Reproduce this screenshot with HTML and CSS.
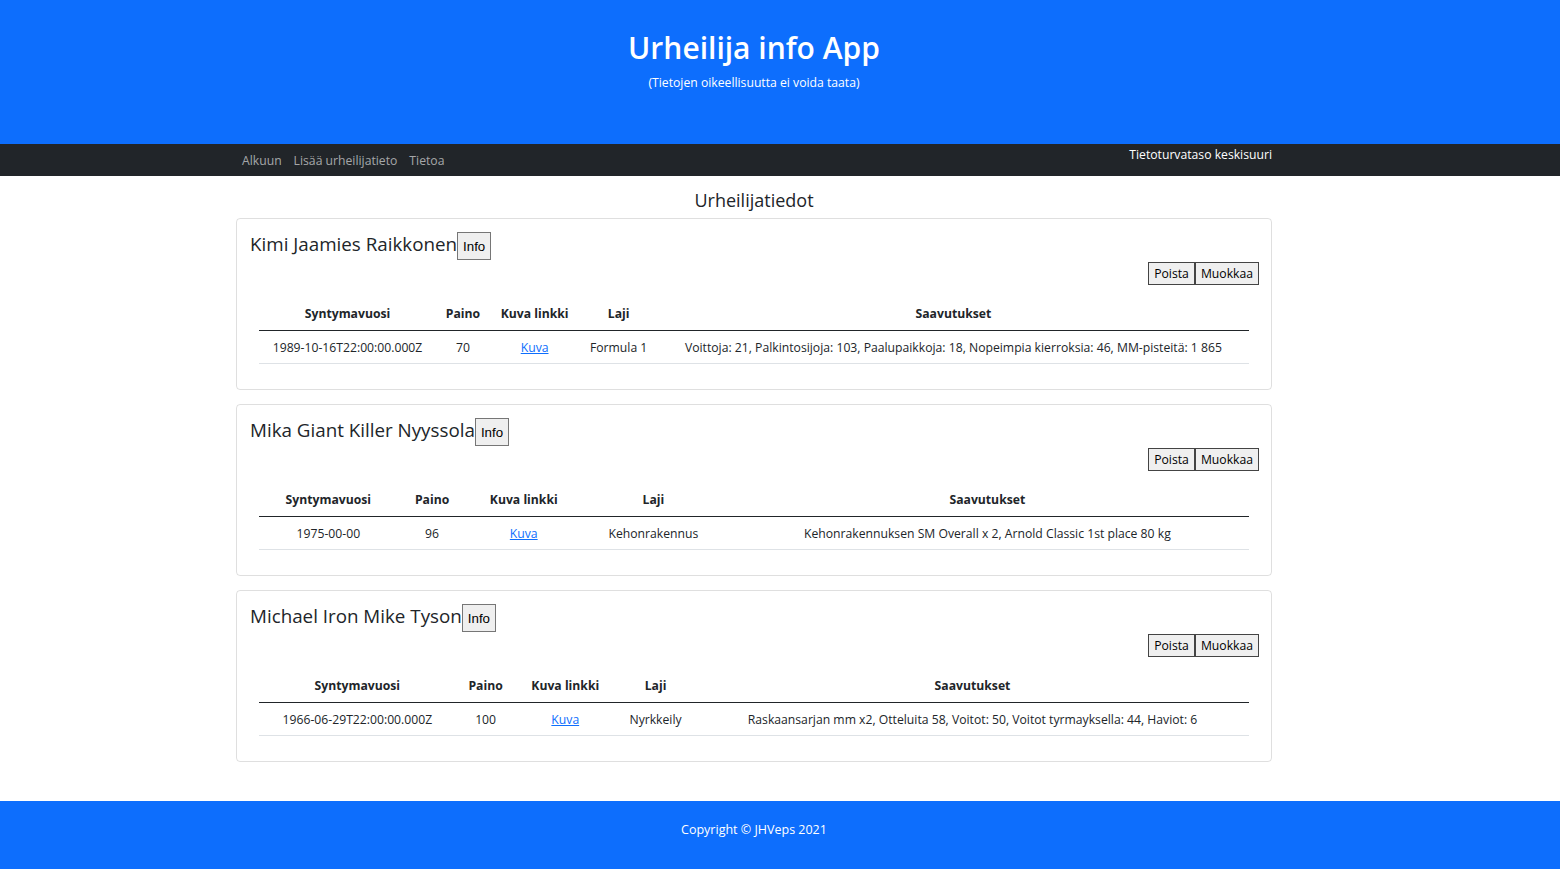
FILE: index.html
```html
<!DOCTYPE html>
<html lang="fi">
<head>
<meta charset="utf-8">
<title>Urheilija info App</title>
<link rel="stylesheet" href="styles.css">
</head>
<body>
<header class="hero">
  <h1 class="hero-title">Urheilija info App</h1>
  <p class="hero-sub">(Tietojen oikeellisuutta ei voida taata)</p>
</header>
<nav class="navbar">
  <div class="nav-inner">
    <div class="nav-links">
      <a class="nav-link" href="#">Alkuun</a>
      <a class="nav-link" href="#">Lisää urheilijatieto</a>
      <a class="nav-link" href="#">Tietoa</a>
    </div>
    <div class="nav-status">Tietoturvataso keskisuuri</div>
  </div>
</nav>
<main class="main">
  <div class="container">
  <h2 class="page-title">Urheilijatiedot</h2>

  <section class="card">
    <div class="card-title-row"><h3 class="name">Kimi Jaamies Raikkonen</h3><button class="btn-info">Info</button></div>
    <div class="actions"><button class="btn">Poista</button><button class="btn">Muokkaa</button></div>
    <table class="table">
      <thead><tr><th>Syntymavuosi</th><th>Paino</th><th>Kuva linkki</th><th>Laji</th><th>Saavutukset</th></tr></thead>
      <tbody><tr><td>1989-10-16T22:00:00.000Z</td><td>70</td><td><a href="#">Kuva</a></td><td>Formula 1</td><td>Voittoja: 21, Palkintosijoja: 103, Paalupaikkoja: 18, Nopeimpia kierroksia: 46, MM-pisteitä: 1 865</td></tr></tbody>
    </table>
  </section>

  <section class="card">
    <div class="card-title-row"><h3 class="name">Mika Giant Killer Nyyssola</h3><button class="btn-info">Info</button></div>
    <div class="actions"><button class="btn">Poista</button><button class="btn">Muokkaa</button></div>
    <table class="table">
      <thead><tr><th>Syntymavuosi</th><th>Paino</th><th>Kuva linkki</th><th>Laji</th><th>Saavutukset</th></tr></thead>
      <tbody><tr><td>1975-00-00</td><td>96</td><td><a href="#">Kuva</a></td><td>Kehonrakennus</td><td>Kehonrakennuksen SM Overall x 2, Arnold Classic 1st place 80 kg</td></tr></tbody>
    </table>
  </section>

  <section class="card">
    <div class="card-title-row"><h3 class="name">Michael Iron Mike Tyson</h3><button class="btn-info">Info</button></div>
    <div class="actions"><button class="btn">Poista</button><button class="btn">Muokkaa</button></div>
    <table class="table">
      <thead><tr><th>Syntymavuosi</th><th>Paino</th><th>Kuva linkki</th><th>Laji</th><th>Saavutukset</th></tr></thead>
      <tbody><tr><td>1966-06-29T22:00:00.000Z</td><td>100</td><td><a href="#">Kuva</a></td><td>Nyrkkeily</td><td>Raskaansarjan mm x2, Otteluita 58, Voitot: 50, Voitot tyrmayksella: 44, Haviot: 6</td></tr></tbody>
    </table>
  </section>
  </div>
</main>
<footer class="footer">Copyright © JHVeps 2021</footer>
</body>
</html>
```
FILE: styles.css
```css
* { box-sizing: border-box; }
body {
  margin: 0;
  font-family: "Open Sans", "Noto Sans", sans-serif;
  font-size: 12.2px;
  color: #212529;
  background: #fff;
}
.hero {
  background: #0d6efd;
  color: #fff;
  height: 144px;
  text-align: center;
  padding: 28px 52px 0 0;
}
.hero-title {
  margin: 0;
  font-size: 30px;
  font-weight: 600;
  line-height: 40px;
}
.hero-sub {
  margin: 6px 0 0;
  font-size: 12.2px;
  line-height: 18px;
}
.navbar {
  background: #212529;
  height: 32px;
  padding-right: 52px;
}
.nav-inner {
  width: 1036px;
  margin: 0 auto;
  display: flex;
  justify-content: space-between;
  align-items: flex-start;
}
.nav-links {
  display: flex;
  gap: 12px;
  padding: 8px 0 0 6px;
}
.nav-link {
  color: rgba(255,255,255,.6);
  text-decoration: none;
  font-size: 12.2px;
  line-height: 18px;
}
.nav-status {
  color: #fff;
  font-size: 12.2px;
  line-height: 20px;
  padding-top: 1px;
}
.main {
  padding: 0 52px 39px 0;
}
.container {
  width: 1036px;
  margin: 0 auto;
}
.page-title {
  margin: 0;
  padding: 12px 0 6px;
  text-align: center;
  font-size: 18px;
  font-weight: 500;
  line-height: 24px;
}
.card {
  border: 1px solid rgba(0,0,0,.125);
  border-radius: 4px;
  padding: 13px 12px 26px 13px;
  height: 172px;
  margin-bottom: 14px;
}
.card:last-child { margin-bottom: 0; }
.card-title-row {
  display: flex;
  align-items: flex-start;
  height: 28px;
}
.name {
  margin: 0;
  font-size: 18.8px;
  font-weight: 500;
  line-height: 24px;
}
.btn-info {
  font-family: "Liberation Sans", Arial, sans-serif;
  font-size: 13.3px;
  background: #efefef;
  border: 1px solid #767676;
  color: #000;
  height: 28px;
  padding: 0 5px;
}
.actions {
  display: flex;
  justify-content: flex-end;
  margin-top: 2px;
}
.btn {
  font-family: "Open Sans", sans-serif;
  font-size: 12.2px;
  background: #efefef;
  border: 1px solid #444;
  color: #000;
  height: 23px;
  padding: 0 5px;
}
.table {
  width: 990px;
  margin: 13px 0 0 9px;
  border-collapse: collapse;
}
.table th, .table td {
  text-align: center;
  line-height: 16px;
}
.table th {
  padding: 8px 8px 8px;
  font-weight: 700;
  border-bottom: 1px solid #212529;
}
.table td {
  padding: 9px 8px 7px;
  border-bottom: 1px solid #dee2e6;
}
.table a { color: #0d6efd; }
.footer {
  background: #0d6efd;
  color: #fff;
  height: 68px;
  padding: 20px 52px 0 0;
  line-height: 18px;
  text-align: center;
  font-size: 12.5px;
}
```
